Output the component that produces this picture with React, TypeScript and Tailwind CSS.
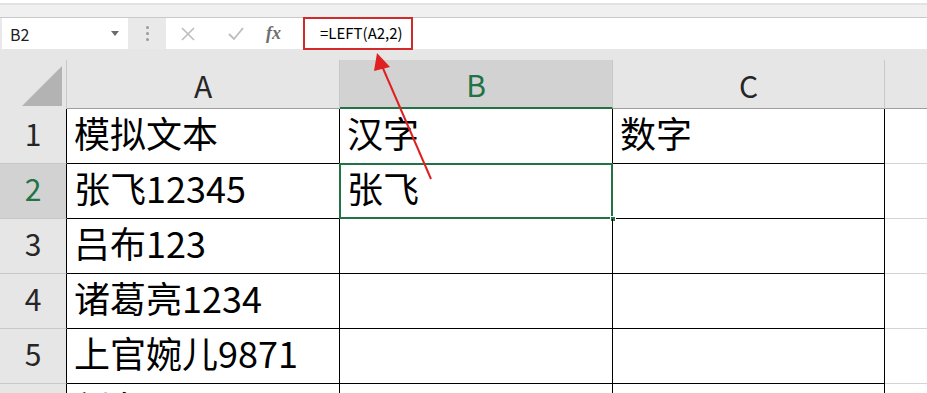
import React from 'react';

const cjk = { fontFamily: '"Noto Sans CJK SC", "Noto Sans", sans-serif' };

const rows = [
  { n: '1', a: '模拟文本', b: '汉字', c: '数字' },
  { n: '2', a: '张飞12345', b: '张飞', c: '' },
  { n: '3', a: '吕布123', b: '', c: '' },
  { n: '4', a: '诸葛亮1234', b: '', c: '' },
  { n: '5', a: '上官婉儿9871', b: '', c: '' },
  { n: '6', a: '刘备56789', b: '', c: '' },
];

function FormulaBar() {
  return (
    <div className="flex h-[31px] bg-[#e9e9e9]">
      <div className="ml-[2px] flex h-[31px] w-[126px] items-center justify-between bg-white pl-[8px] pr-[9px] text-[16px] text-[#222]" style={cjk}>
        <span>B2</span>
        <svg width="8" height="5" viewBox="0 0 8 5"><path d="M0 0h8L4 5z" fill="#6b6b6b" /></svg>
      </div>
      <div className="flex w-[38px] flex-col items-center justify-center gap-[3px]">
        <span className="h-[3px] w-[3px] rounded-full bg-[#9a9a9a]" />
        <span className="h-[3px] w-[3px] rounded-full bg-[#9a9a9a]" />
        <span className="h-[3px] w-[3px] rounded-full bg-[#9a9a9a]" />
      </div>
      <div className="flex h-[31px] flex-1 items-center bg-white">
        <div className="flex w-[134px] items-center">
          <svg className="ml-[15px]" width="14" height="14" viewBox="0 0 14 14">
            <path d="M1 1l12 12M13 1L1 13" stroke="#bdbdbd" strokeWidth="1.6" />
          </svg>
          <svg className="ml-[33px]" width="16" height="13" viewBox="0 0 16 13">
            <path d="M1 7l5 5L15 1" stroke="#bdbdbd" strokeWidth="1.8" fill="none" />
          </svg>
          <span className="ml-[22px] text-[18px] italic font-bold text-[#6e6e6e]" style={{ fontFamily: '"Liberation Serif", serif' }}>fx</span>
        </div>
        <div className="-mt-[1px] ml-[3px] flex h-[33px] w-[110px] items-center border-2 border-[#d12a2a] pl-[15px] text-[15px] text-black" style={cjk}>
          =LEFT(A2,2)
        </div>
      </div>
    </div>
  );
}

function HeaderRow() {
  const cols = [
    { l: 'A', w: 'w-[273px]', sel: false },
    { l: 'B', w: 'w-[273px]', sel: true },
    { l: 'C', w: 'w-[272px]', sel: false },
  ];
  return (
    <div className="flex h-[60px] bg-[#e6e6e6] pt-[11px]" style={cjk}>
      <div className="flex w-[67px] items-end justify-end border-r border-[#c8c8c8] pb-[3px] pr-[4px]">
        <svg width="40" height="40" viewBox="0 0 40 40"><path d="M40 0V40H0z" fill="#b3b3b3" /></svg>
      </div>
      {cols.map((c) => (
        <div
          key={c.l}
          className={`flex ${c.w} items-center justify-center border-r text-[30px] leading-none ${
            c.sel
              ? 'bg-[#d2d2d2] border-[#c8c8c8] border-b-2 border-b-[#217346] text-[#217346]'
              : 'border-[#c8c8c8] border-b border-b-[#9e9e9e] text-[#262626]'
          }`}
        >
          <span className="mt-[1px]">{c.l}</span>
        </div>
      ))}
      <div className="flex-1 border-b border-[#9e9e9e]" />
    </div>
  );
}

export default function App() {
  return (
    <div className="relative h-[393px] w-[927px] overflow-hidden bg-white">
      <div className="h-[15px] border-b border-[#c9c9c9] bg-[#f0f0f0]">
        <div className="mt-[3px] h-[2px] bg-[#e2e2e2]" />
      </div>
      <FormulaBar />
      <HeaderRow />
      {rows.map((r) => {
        const selRow = r.n === '2';
        return (
          <div key={r.n} className="flex h-[55px]" style={cjk}>
            <div
              className={`flex w-[67px] items-center justify-center border-r border-r-black border-b border-b-[#c8c8c8] pb-[6px] text-[30px] leading-none ${
                selRow ? 'bg-[#d2d2d2] text-[#217346]' : 'bg-[#e6e6e6] text-[#262626]'
              }`}
            >
              {r.n}
            </div>
            <div className="flex w-[273px] items-center border-r border-b border-black pb-[8px] pl-[7px] text-[36px] leading-none text-black">
              {r.a}
            </div>
            <div className="relative flex w-[273px] items-center border-r border-b border-black pb-[8px] pl-[7px] text-[36px] leading-none text-black">
              {r.b}
              {selRow && (
                <>
                  <div className="pointer-events-none absolute -left-[1px] -top-[1px] -right-[1px] -bottom-[1px] border-2 border-[#217346]" />
                  <div className="absolute -bottom-[4px] -right-[4px] h-[6px] w-[6px] border border-white bg-[#217346]" />
                </>
              )}
            </div>
            <div className="flex w-[272px] items-center border-r border-b border-black pb-[8px] pl-[7px] text-[36px] leading-none text-black">
              {r.c}
            </div>
            <div className="flex-1 border-b border-[#d4d4d4]" />
          </div>
        );
      })}
      <svg className="pointer-events-none absolute left-0 top-0" width="927" height="393">
        <line x1="431" y1="179" x2="382" y2="66" stroke="#e02020" strokeWidth="2" />
        <path d="M377 53L390 67L374 71z" fill="#e02020" />
      </svg>
    </div>
  );
}
